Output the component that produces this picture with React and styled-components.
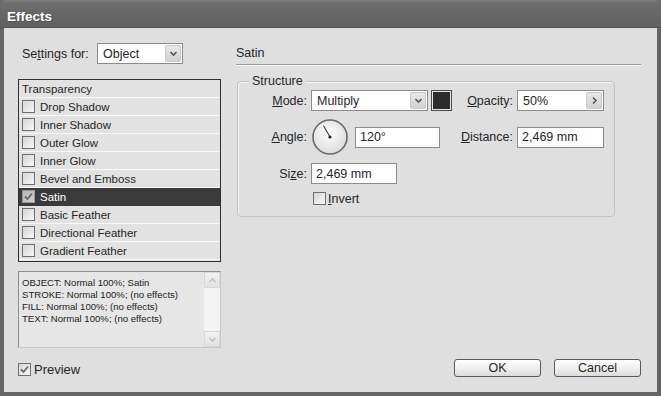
import React from 'react';
import styled, { createGlobalStyle } from 'styled-components';

const GlobalStyle = createGlobalStyle`
  html, body {
    margin: 0;
    padding: 0;
    background: #6a6a6a;
  }
  body {
    font-family: "Liberation Sans", Arial, sans-serif;
    font-size: 12px;
    color: #262626;
  }
  * {
    box-sizing: border-box;
  }
`;

const Window = styled.div`
  width: 661px;
  height: 396px;
  display: flex;
  flex-direction: column;
  background: #656565;
  border-radius: 6px 6px 0 0;
  overflow: hidden;
`;

const TitleBar = styled.div`
  height: 28px;
  flex: none;
  display: flex;
  align-items: center;
  padding: 5px 0 0 7px;
  color: #fff;
  font-weight: bold;
  font-size: 13.5px;
  text-shadow: 1px 1px 0 #4e4e4e;
  background: linear-gradient(#7c7c7c 0, #6d6d6d 3px, #666 60%, #606060 100%);
  border-bottom: 1px solid #555;
`;

const Body = styled.div`
  flex: 1;
  margin: 0 4px 4px;
  background: #dfdfdf;
  display: grid;
  grid-template-columns: 203px 405px;
  column-gap: 15px;
  padding: 15px 16px 0 14px;
`;

const Column = styled.div`
  display: flex;
  flex-direction: column;
`;

const SettingsRow = styled.div`
  display: flex;
  align-items: center;
  height: 21px;
`;

const SettingsLabel = styled.span`
  width: 79px;
  padding-left: 4px;
  font-size: 12.5px;
`;

const SelectBox = styled.div`
  width: ${p => p.$w}px;
  height: 21px;
  display: flex;
  align-items: center;
  background: #fff;
  border: 1px solid #8c8c8c;
  padding: 1px 1px 1px 5px;
  font-size: 12.5px;
`;

const SelectText = styled.span`
  flex: 1;
`;

const ArrowButton = styled.span`
  width: 16px;
  height: 17px;
  display: flex;
  align-items: center;
  justify-content: center;
  background: linear-gradient(#e8e8e8, #d2d2d2);
  border: 1px solid #c8c8c8;
  border-radius: 2px;
`;

const EffectList = styled.div`
  margin-top: 15px;
  height: 183px;
  border: 1px solid #2f2f2f;
  background: #e2e2e2;
  display: flex;
  flex-direction: column;
`;

const ListRow = styled.div`
  height: 18px;
  flex: none;
  display: flex;
  align-items: center;
  gap: 5px;
  padding-left: 3px;
  font-size: 11.5px;
  background: ${p => (p.$selected ? '#3b3b3b' : '#e2e2e2')};
  color: ${p => (p.$selected ? '#fff' : '#262626')};
  border-bottom: 1px solid ${p => (p.$selected ? '#3b3b3b' : '#f7f7f7')};
`;

const Box = styled.span`
  width: 13px;
  height: 13px;
  flex: none;
  display: flex;
  align-items: center;
  justify-content: center;
  border: 1px solid ${p => (p.$dark ? '#9a9a9a' : '#6f6f6f')};
  background: ${p =>
    p.$dark
      ? 'linear-gradient(135deg, #b5b5b5, #d0d0d0)'
      : 'linear-gradient(135deg, #d6d6d6, #f7f7f7)'};
`;

const DescBox = styled.div`
  margin-top: 9px;
  height: 77px;
  display: flex;
  background: #e6e6e6;
  border: 1px solid #8e8e8e;
  border-right-color: #c8c8c8;
  border-bottom-color: #c8c8c8;
`;

const DescText = styled.div`
  flex: 1;
  padding: 5px 0 0 3px;
  font-size: 9.6px;
  line-height: 12px;
  color: #222;
`;

const ScrollBar = styled.div`
  width: 16px;
  display: flex;
  flex-direction: column;
  justify-content: space-between;
  background: #f4f4f4;
`;

const ScrollButton = styled.span`
  height: 16px;
  display: flex;
  align-items: center;
  justify-content: center;
  background: linear-gradient(#f2f2f2, #e2e2e2);
  border: 1px solid #d8d8d8;
`;

const PreviewRow = styled.label`
  margin-top: 14px;
  display: flex;
  align-items: center;
  gap: 3px;
  font-size: 13px;
`;

const SectionHeader = styled.div`
  height: 22px;
  display: flex;
  align-items: center;
  padding-bottom: 1px;
  font-size: 12.5px;
  border-bottom: 1px solid #9a9a9a;
  box-shadow: 0 1px 0 #fbfbfb;
`;

const Group = styled.div`
  position: relative;
  margin: 16px 0 0 1px;
  width: 378px;
  height: 136px;
  border: 1px solid #c3c3c3;
  border-radius: 4px;
  box-shadow: inset 1px 1px 0 #f4f4f4;
  padding-top: 8px;
  display: grid;
  grid-template-columns: 73px 145px 61px 87px;
  grid-template-rows: 21px 36px 21px 13px;
  row-gap: 8px;
`;

const Legend = styled.span`
  position: absolute;
  top: -8px;
  left: 11px;
  padding: 0 3px;
  background: #dfdfdf;
  font-size: 12.5px;
  line-height: 14px;
`;

const FieldLabel = styled.span`
  display: flex;
  align-items: center;
  justify-content: flex-end;
  padding-right: 4px;
  font-size: 12.5px;
`;

const Cell = styled.div`
  display: flex;
  align-items: center;
  gap: ${p => p.$gap || 0}px;
  padding-left: ${p => p.$pad || 0}px;
`;

const TextInput = styled.div`
  width: ${p => p.$w}px;
  height: 21px;
  display: flex;
  align-items: center;
  padding-left: 4px;
  background: #fff;
  border: 1px solid #8c8c8c;
  font-size: 12.5px;
`;

const Swatch = styled.span`
  width: 21px;
  height: 21px;
  border: 1px solid #4a4a4a;
  box-shadow: inset 0 0 0 1px #e8e8e8;
  background: #2c2c2c;
`;

const InvertLabel = styled.span`
  margin-left: 2px;
  font-size: 12.5px;
`;

const ButtonRow = styled.div`
  margin-top: auto;
  margin-bottom: 15px;
  display: flex;
  justify-content: flex-end;
  gap: 13px;
`;

const Button = styled.button`
  width: 87px;
  height: 18px;
  padding: 0;
  font-family: inherit;
  font-size: 12.5px;
  color: #262626;
  border: 1px solid #5a5a5a;
  border-radius: 3px;
  background: linear-gradient(#ffffff, #ececec 60%, #dcdcdc);
`;

const Chevron = ({ dir = 'down' }) => (
  <svg width="9" height="9" viewBox="0 0 9 9">
    {dir === 'down' && <path d="M1.5 3 L4.5 6 L7.5 3" fill="none" stroke="#555" strokeWidth="1.6" />}
    {dir === 'right' && <path d="M3 1.5 L6 4.5 L3 7.5" fill="none" stroke="#555" strokeWidth="1.6" />}
    {dir === 'up' && <path d="M1.5 6 L4.5 3 L7.5 6" fill="none" stroke="#bbb" strokeWidth="1.3" />}
    {dir === 'downLight' && <path d="M1.5 3 L4.5 6 L7.5 3" fill="none" stroke="#bbb" strokeWidth="1.3" />}
  </svg>
);

const Check = () => (
  <svg width="11" height="11" viewBox="0 0 11 11">
    <path d="M2 5.5 L4.5 8 L9 2.5" fill="none" stroke="#6a6a6a" strokeWidth="1.8" />
  </svg>
);

const CheckBox = ({ checked, dark }) => <Box $dark={dark}>{checked && <Check />}</Box>;

const Dial = ({ angle }) => {
  const rad = (angle * Math.PI) / 180;
  const x = 18 + Math.cos(rad) * 13;
  const y = 18 - Math.sin(rad) * 13;
  return (
    <svg width="37" height="37" viewBox="0 0 37 37" style={{ marginLeft: 1 }}>
      <defs>
        <radialGradient id="dialFill" cx="45%" cy="40%" r="60%">
          <stop offset="0" stopColor="#ffffff" />
          <stop offset="1" stopColor="#dcdcdc" />
        </radialGradient>
      </defs>
      <circle cx="18" cy="18" r="17" fill="url(#dialFill)" stroke="#6a6a6a" strokeWidth="1.6" />
      <line x1="18" y1="18" x2={x} y2={y} stroke="#444" strokeWidth="1.2" />
      <circle cx="18" cy="18" r="1.6" fill="#222" />
    </svg>
  );
};

const effects = [
  'Drop Shadow',
  'Inner Shadow',
  'Outer Glow',
  'Inner Glow',
  'Bevel and Emboss',
  'Satin',
  'Basic Feather',
  'Directional Feather',
  'Gradient Feather',
];

const App = () => {
  const active = 'Satin';

  return (
    <>
      <GlobalStyle />
      <Window>
        <TitleBar>Effects</TitleBar>
        <Body>
          <Column>
            <SettingsRow>
              <SettingsLabel>
                Se<u>t</u>tings for:
              </SettingsLabel>
              <SelectBox $w={86}>
                <SelectText>Object</SelectText>
                <ArrowButton>
                  <Chevron />
                </ArrowButton>
              </SelectBox>
            </SettingsRow>

            <EffectList>
              <ListRow>Transparency</ListRow>
              {effects.map(name => (
                <ListRow key={name} $selected={name === active}>
                  <CheckBox checked={name === active} dark={name === active} />
                  {name}
                </ListRow>
              ))}
            </EffectList>

            <DescBox>
              <DescText>
                OBJECT: Normal 100%; Satin
                <br />
                STROKE: Normal 100%; (no effects)
                <br />
                FILL: Normal 100%; (no effects)
                <br />
                TEXT: Normal 100%; (no effects)
              </DescText>
              <ScrollBar>
                <ScrollButton>
                  <Chevron dir="up" />
                </ScrollButton>
                <ScrollButton>
                  <Chevron dir="downLight" />
                </ScrollButton>
              </ScrollBar>
            </DescBox>

            <PreviewRow>
              <CheckBox checked />
              Preview
            </PreviewRow>
          </Column>

          <Column>
            <SectionHeader>Satin</SectionHeader>

            <Group>
              <Legend>Structure</Legend>

              <FieldLabel>
                <u>M</u>ode:
              </FieldLabel>
              <Cell $gap={3}>
                <SelectBox $w={117}>
                  <SelectText>Multiply</SelectText>
                  <ArrowButton>
                    <Chevron />
                  </ArrowButton>
                </SelectBox>
                <Swatch />
              </Cell>
              <FieldLabel>
                <u>O</u>pacity:
              </FieldLabel>
              <Cell>
                <SelectBox $w={87}>
                  <SelectText>50%</SelectText>
                  <ArrowButton>
                    <Chevron dir="right" />
                  </ArrowButton>
                </SelectBox>
              </Cell>

              <FieldLabel>
                <u>A</u>ngle:
              </FieldLabel>
              <Cell $gap={6}>
                <Dial angle={120} />
                <TextInput $w={85}>120°</TextInput>
              </Cell>
              <FieldLabel>
                <u>D</u>istance:
              </FieldLabel>
              <Cell>
                <TextInput $w={87}>2,469 mm</TextInput>
              </Cell>

              <FieldLabel>
                Si<u>z</u>e:
              </FieldLabel>
              <Cell>
                <TextInput $w={86}>2,469 mm</TextInput>
              </Cell>
              <span />
              <span />

              <span />
              <Cell $pad={2}>
                <CheckBox />
                <InvertLabel>
                  <u>I</u>nvert
                </InvertLabel>
              </Cell>
            </Group>

            <ButtonRow>
              <Button>OK</Button>
              <Button>Cancel</Button>
            </ButtonRow>
          </Column>
        </Body>
      </Window>
    </>
  );
};

export default App;
